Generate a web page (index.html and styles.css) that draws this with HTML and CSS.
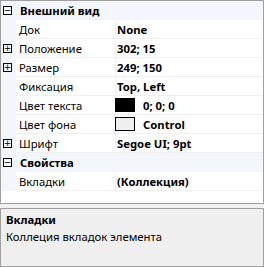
FILE: index.html
```html
<!DOCTYPE html>
<html lang="ru">
<head>
    <meta charset="UTF-8">
    <title>Свойства</title>
    <link rel="stylesheet" href="styles.css">
</head>
<body>

<div class="panel">
    <!-- Property grid -->
    <div class="grid">
        <div class="cat">
            <span class="box">&minus;</span>
            <span class="cat-name">Внешний вид</span>
        </div>
        <div class="row">
            <span class="gutter"></span>
            <span class="name">Док</span>
            <span class="value">None</span>
        </div>
        <div class="row">
            <span class="gutter"><span class="box">+</span></span>
            <span class="name">Положение</span>
            <span class="value">302; 15</span>
        </div>
        <div class="row">
            <span class="gutter"><span class="box">+</span></span>
            <span class="name">Размер</span>
            <span class="value">249; 150</span>
        </div>
        <div class="row">
            <span class="gutter"></span>
            <span class="name">Фиксация</span>
            <span class="value">Top, Left</span>
        </div>
        <div class="row">
            <span class="gutter"></span>
            <span class="name">Цвет текста</span>
            <span class="value"><span class="swatch black"></span>0; 0; 0</span>
        </div>
        <div class="row">
            <span class="gutter"></span>
            <span class="name">Цвет фона</span>
            <span class="value"><span class="swatch control"></span>Control</span>
        </div>
        <div class="row">
            <span class="gutter"><span class="box">+</span></span>
            <span class="name">Шрифт</span>
            <span class="value">Segoe UI; 9pt</span>
        </div>
        <div class="cat">
            <span class="box">&minus;</span>
            <span class="cat-name">Свойства</span>
        </div>
        <div class="row">
            <span class="gutter"></span>
            <span class="name">Вкладки</span>
            <span class="value">(Коллекция)</span>
        </div>
    </div>

    <!-- Description -->
    <div class="desc">
        <div class="desc-title">Вкладки</div>
        <div class="desc-text">Коллеция вкладок элемента</div>
    </div>
</div>

</body>
</html>
```

FILE: styles.css
```css
body {
    margin: 0;
    background-color: #f0f0f0;
    font-family: "Noto Sans", "Open Sans", sans-serif;
    font-size: 11.3px;
    color: #000;
}
.panel {
    width: 264px;
    height: 267px;
    display: flex;
    flex-direction: column;
    gap: 4px;
}
.grid {
    height: 204px;
    box-sizing: border-box;
    border: 1px solid #a0a0a0;
    background-color: #fff;
}
.cat {
    display: flex;
    align-items: center;
    height: 19px;
    background-color: #f3f6fb;
}
.cat .box {
    margin: 0 8px 0 2px;
}
.cat-name {
    font-weight: bold;
}
.row {
    display: flex;
    height: 19px;
    align-items: stretch;
}
.gutter {
    width: 15px;
    flex-shrink: 0;
    display: flex;
    align-items: center;
    background-color: #f3f6fb;
}
.gutter .box {
    margin-left: 2px;
}
.box {
    width: 9px;
    height: 9px;
    box-sizing: border-box;
    border: 1px solid #000;
    display: flex;
    align-items: center;
    justify-content: center;
    font-size: 9px;
    line-height: 1;
    font-family: "DejaVu Sans", sans-serif;
    flex-shrink: 0;
}
.name {
    width: 100px;
    flex-shrink: 0;
    box-sizing: border-box;
    padding-left: 3px;
    display: flex;
    align-items: center;
    border-bottom: 1px solid #f0f0f0;
    border-right: 1px solid #f0f0f0;
}
.value {
    flex: 1;
    display: flex;
    align-items: center;
    padding-left: 1px;
    font-weight: bold;
    border-bottom: 1px solid #f0f0f0;
}
.swatch {
    width: 20px;
    height: 14px;
    box-sizing: border-box;
    border: 1px solid #000;
    margin: 0 8px 0 -2px;
}
.swatch.black {
    background-color: #000;
}
.swatch.control {
    background-color: #f0f0f0;
}
.desc {
    flex: 1;
    box-sizing: border-box;
    border: 1px solid #a0a0a0;
    background-color: #f0f0f0;
    padding: 3px 5px;
}
.desc-title {
    font-weight: bold;
    line-height: 16px;
}
.desc-text {
    line-height: 18px;
}
```
